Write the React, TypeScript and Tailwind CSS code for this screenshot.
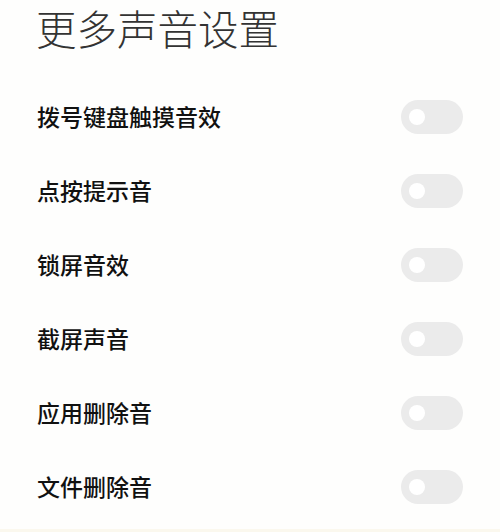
const items = ['拨号键盘触摸音效', '点按提示音', '锁屏音效', '截屏声音', '应用删除音', '文件删除音']

function Toggle() {
  return (
    <div className="flex h-[34px] w-[62px] items-center rounded-full bg-[#ebebeb] pl-[8px]">
      <div className="h-[16px] w-[16px] rounded-full bg-white" />
    </div>
  )
}

export default function App() {
  return (
    <div
      className="flex h-[532px] w-[500px] flex-col overflow-hidden bg-[#fefefd]"
      style={{ fontFamily: '"Noto Sans CJK SC", "Noto Sans", sans-serif' }}
    >
      {/* Header */}
      <div className="flex h-[80px] items-start pl-[36px] pt-[4px]">
        <h1 className="text-[40.5px] font-light leading-[48px] text-[#333333]">更多声音设置</h1>
      </div>

      {/* Settings list */}
      <div className="flex flex-col">
        {items.map((label) => (
          <div key={label} className="flex h-[74px] items-center justify-between px-[37px]">
            <span className="pb-[2px] text-[23px] font-medium leading-none text-[#111111]">{label}</span>
            <Toggle />
          </div>
        ))}
      </div>

      <div className="flex-1" />
      <div className="h-[3px] bg-[#fbf8ee]" />
    </div>
  )
}
